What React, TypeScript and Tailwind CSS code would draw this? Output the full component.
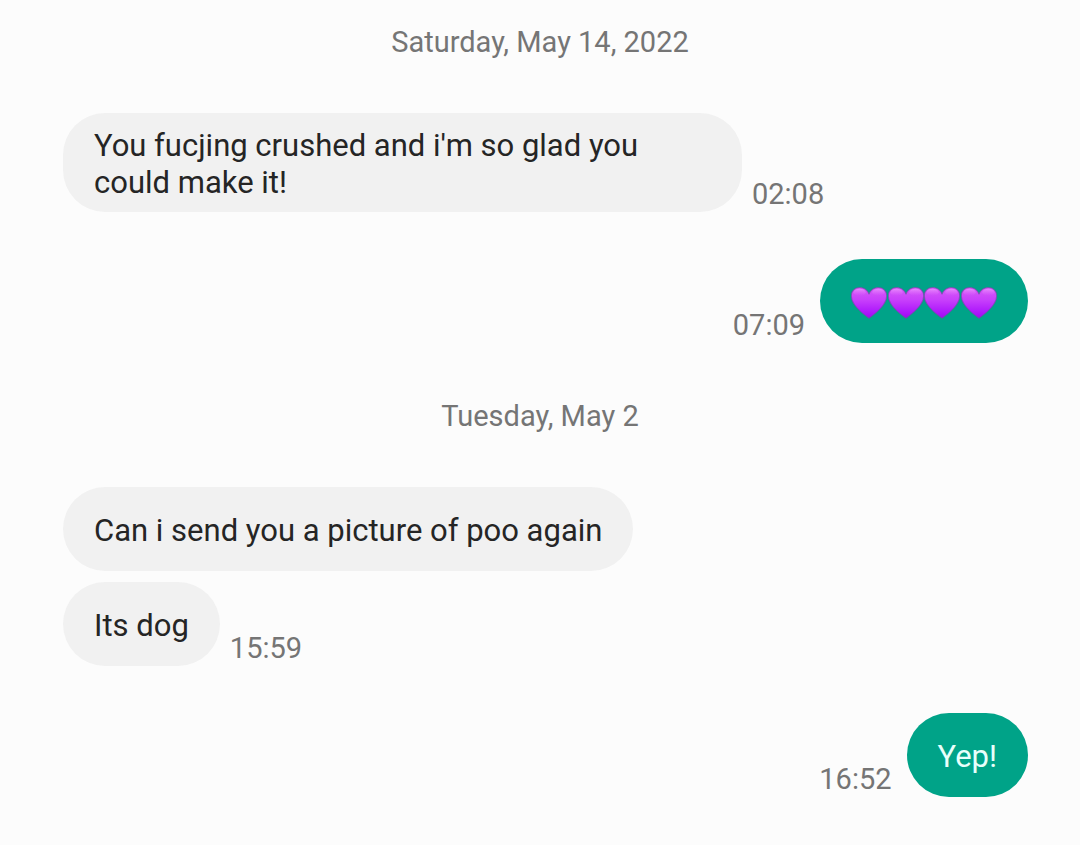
import type { ReactNode } from 'react'
import clsx from 'clsx'

interface Message {
  id: number
  text?: string
  hearts?: number
  time?: string
  sent?: boolean
}

interface Day {
  label: string
  groups: Message[][]
}

const days: Day[] = [
  {
    label: 'Saturday, May 14, 2022',
    groups: [
      [{ id: 1, text: "You fucjing crushed and i'm so glad you could make it!", time: '02:08' }],
      [{ id: 2, hearts: 4, time: '07:09', sent: true }],
    ],
  },
  {
    label: 'Tuesday, May 2',
    groups: [
      [
        { id: 3, text: 'Can i send you a picture of poo again' },
        { id: 4, text: 'Its dog', time: '15:59' },
      ],
      [{ id: 5, text: 'Yep!', time: '16:52', sent: true }],
    ],
  },
]

function HeartDefs() {
  return (
    <svg className="absolute size-0" aria-hidden="true">
      <defs>
        <linearGradient id="heart-fill" x1="0" y1="0" x2="0" y2="1">
          <stop offset="0" stopColor="#d75bf7" />
          <stop offset="0.4" stopColor="#c840fb" />
          <stop offset="0.75" stopColor="#b01cfb" />
          <stop offset="1" stopColor="#a008f4" />
        </linearGradient>
        <linearGradient id="heart-shine" x1="0" y1="0" x2="0" y2="1">
          <stop offset="0" stopColor="#f0a0ff" stopOpacity="0.7" />
          <stop offset="1" stopColor="#e070ff" stopOpacity="0" />
        </linearGradient>
      </defs>
    </svg>
  )
}

function Heart() {
  return (
    <svg viewBox="0.4 0.4 35.2 31.3" className="h-8 w-9" aria-hidden="true">
      <path
        d="M18 31C15 28.8 8 23.4 4.2 18.2C1.6 14.7 .7 12 .7 9.2C.7 4.4 4.3 1 8.9 1C13 1 16.4 3.4 18 7.4C19.6 3.4 23 1 27.1 1C31.7 1 35.3 4.4 35.3 9.2C35.3 12 34.4 14.7 31.8 18.2C28 23.4 21 28.8 18 31Z"
        fill="url(#heart-fill)"
        stroke="#7a45a8"
        strokeOpacity="0.65"
        strokeLinejoin="round"
      />
      <ellipse cx="8.8" cy="5.5" rx="6" ry="3.5" fill="url(#heart-shine)" />
      <ellipse cx="27.2" cy="5.5" rx="6" ry="3.5" fill="url(#heart-shine)" />
    </svg>
  )
}

function Bubble({ sent, children }: { sent?: boolean; children: ReactNode }) {
  return (
    <div
      className={clsx(
        'flex min-h-[84px] max-w-[679px] items-center rounded-[42px] px-[31px] pt-[14px] pb-[11px] text-[31px] leading-[37px]',
        sent ? 'bg-[#00a388] text-[#e8fffb]' : 'bg-[#f1f1f1] text-[#252525]',
      )}
    >
      {children}
    </div>
  )
}

function MessageRow({ message }: { message: Message }) {
  const { text, hearts, time, sent } = message

  return (
    <li className={clsx('flex items-end', sent ? 'flex-row-reverse gap-[15px]' : 'gap-[10px]')}>
      <Bubble sent={sent}>
        {hearts ? (
          <div role="img" aria-label="Purple hearts" className="flex w-[146px] justify-between">
            {Array.from({ length: hearts }, (_, i) => (
              <Heart key={i} />
            ))}
          </div>
        ) : (
          <p>{text}</p>
        )}
      </Bubble>
      {time && <time className="text-[29px] leading-9 text-[#757575]">{time}</time>}
    </li>
  )
}

export default function App() {
  return (
    <main className="min-h-screen bg-[#fcfcfc] pt-6 pr-[52px] pb-12 pl-[63px] font-[Roboto,sans-serif]">
      <HeartDefs />
      <div className="flex flex-col gap-[55px]">
        {days.map((day) => (
          <section key={day.label}>
            <h2 className="-mr-[52px] -ml-[63px] mb-[53px] text-center text-[29px] leading-9 text-[#757575]">
              {day.label}
            </h2>
            <div className="flex flex-col gap-[47px]">
              {day.groups.map((group) => (
                <ul key={group[0].id} className="flex flex-col gap-[11px]">
                  {group.map((message) => (
                    <MessageRow key={message.id} message={message} />
                  ))}
                </ul>
              ))}
            </div>
          </section>
        ))}
      </div>
    </main>
  )
}
